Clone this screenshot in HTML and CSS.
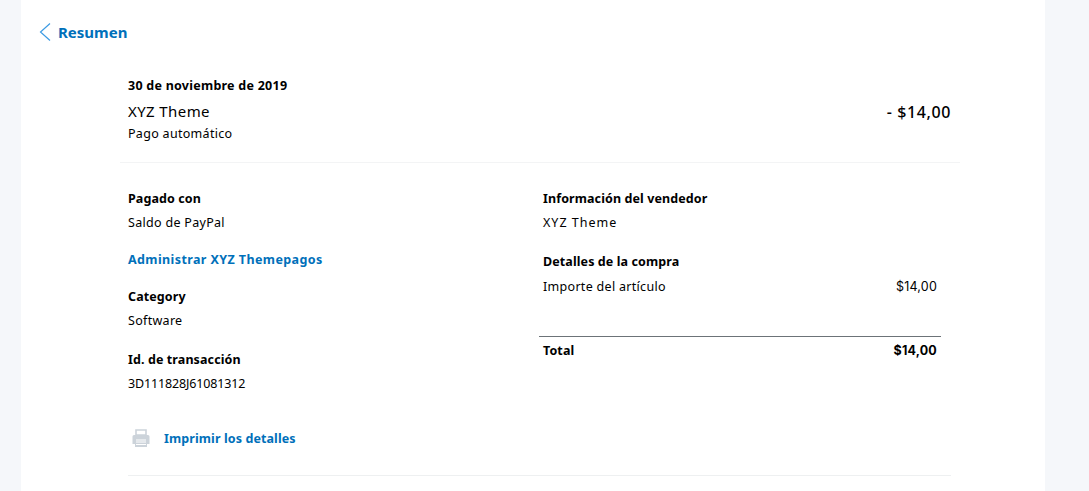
FILE: index.html
```html
<!DOCTYPE html>
<html lang="es">
<head>
    <meta charset="UTF-8">
    <meta name="viewport" content="width=device-width, initial-scale=1.0">
    <title>Resumen</title>
    <link rel="stylesheet" href="styles.css">
</head>
<body>
    <div class="card">
        <a href="#" class="back">
            <svg class="back-icon" width="12" height="18" viewBox="0 0 12 18"><path d="M11 0.5L1.5 9L11 17.5" fill="none" stroke="#3d9be3" stroke-width="1.2"/></svg>
            Resumen
        </a>

        <div class="summary">
            <div class="summary-info">
                <div class="label date">30 de noviembre de 2019</div>
                <div class="merchant">XYZ Theme</div>
                <div class="text">Pago automático</div>
            </div>
            <div class="amount">- $14,00</div>
        </div>

        <div class="details">
            <div class="col-left">
                <div class="block">
                    <div class="label">Pagado con</div>
                    <div class="text">Saldo de PayPal</div>
                </div>
                <a href="#" class="link manage">Administrar XYZ Themepagos</a>
                <div class="block block-wide">
                    <div class="label">Category</div>
                    <div class="text">Software</div>
                </div>
                <div class="block">
                    <div class="label">Id. de transacción</div>
                    <div class="text code">3D111828J61081312</div>
                </div>
                <div class="print">
                    <svg width="18" height="19" viewBox="0 0 18 19"><path d="M4 1h10v5H4z" fill="#fff" stroke="#ccd3da" stroke-width="1.6"/><path d="M2 6h14a1.500 1.500 0 0 1 1.500 1.500V15H15v3H3v-3H.5V7.500A1.500 1.500 0 0 1 2 6z" fill="#ccd3da"/><path d="M4 11h10M4 13h10M4 15.500h10" stroke="#fff" stroke-width="1"/></svg>
                    <a href="#" class="link">Imprimir los detalles</a>
                </div>
            </div>

            <div class="col-right">
                <div class="block block-wide">
                    <div class="label">Información del vendedor</div>
                    <div class="text seller">XYZ Theme</div>
                </div>
                <div class="label">Detalles de la compra</div>
                <div class="row item">
                    <span class="text">Importe del artículo</span>
                    <span class="price">$14,00</span>
                </div>
                <div class="row total">
                    <span class="label">Total</span>
                    <span class="total-price">$14,00</span>
                </div>
            </div>
        </div>

        <div class="bottom-rule"></div>
    </div>
</body>
</html>
```

FILE: styles.css
```css
body {
    margin: 0;
    padding: 0;
    font-family: 'Noto Sans', sans-serif;
    background-color: #f5f7fa;
    color: #000;
    overflow: hidden;
}

.card {
    width: 1024px;
    height: 491px;
    margin-left: 21px;
    background-color: #fff;
    box-sizing: border-box;
    padding-top: 23px;
}

.back {
    display: flex;
    align-items: center;
    gap: 7px;
    margin-left: 18px;
    height: 18px;
    color: #0070ba;
    font-size: 15px;
    font-weight: 700;
    text-decoration: none;
}

.summary {
    display: flex;
    justify-content: space-between;
    align-items: center;
    margin: 35px 85px 0 99px;
    padding: 0 9px 18px 8px;
    height: 68px;
    border-bottom: 1px solid #f3f4f5;
}

.label {
    font-size: 12.500px;
    font-weight: 700;
    line-height: 18px;
    letter-spacing: 0.1px;
}

.date {
    letter-spacing: 0.25px;
}

.text {
    font-size: 12.500px;
    line-height: 18px;
    letter-spacing: 0.3px;
}

.code {
    letter-spacing: -0.15px;
}

.seller {
    letter-spacing: 1px;
}

.merchant {
    font-size: 15px;
    line-height: 20px;
    letter-spacing: 0.4px;
    margin: 6px 0 4px;
}

.amount {
    font-size: 16px;
    font-weight: 500;
    letter-spacing: 0.6px;
    margin-top: 4px;
}

.details {
    display: flex;
    margin: 27px 0 0 107px;
}

.col-left {
    width: 415px;
}

.col-right {
    width: 394px;
}

.block {
    margin-bottom: 19px;
}

.block-wide {
    margin-bottom: 21px;
}

.block .label {
    margin-bottom: 6px;
}

.link {
    color: #0070ba;
    font-size: 12.500px;
    font-weight: 700;
    letter-spacing: 0.1px;
    text-decoration: none;
}

.manage {
    display: block;
    line-height: 18px;
    letter-spacing: 0.4px;
    margin-bottom: 19px;
}

.print {
    display: flex;
    align-items: center;
    gap: 14px;
    margin: 36px 0 0 4px;
}

.row {
    display: flex;
    justify-content: space-between;
}

.item {
    margin-top: 7px;
    height: 58px;
}

.price {
    font-family: 'Inter', sans-serif;
    font-size: 12.500px;
    line-height: 18px;
    letter-spacing: 0.2px;
}

.total {
    margin-left: -4px;
    margin-right: -4px;
    padding: 5px 4px 0;
    border-top: 1px solid #6c7378;
}

.total-price {
    font-family: 'Inter', sans-serif;
    font-size: 12.500px;
    font-weight: 700;
    line-height: 18px;
    letter-spacing: 0.2px;
}

.bottom-rule {
    margin: 27px 94px 0 107px;
    border-top: 1px solid #eef0f1;
}
```
